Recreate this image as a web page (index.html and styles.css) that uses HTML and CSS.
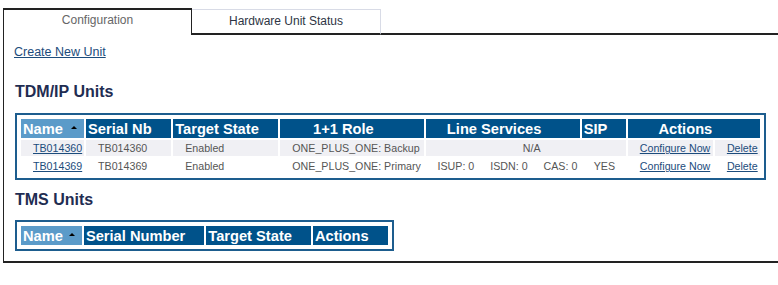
FILE: index.html
```html
<!DOCTYPE html>
<html lang="en">
<head>
    <meta charset="UTF-8">
    <title>Unit Configuration</title>
    <link rel="stylesheet" href="styles.css">
</head>
<body>

    <div class="tab-bar">
        <div class="tab tab-active">Configuration</div>
        <div class="tab">Hardware Unit Status</div>
        <div class="tab-fill"></div>
    </div>

    <div class="panel">
        <a href="#" class="create-link">Create New Unit</a>

        <h3 class="section-title">TDM/IP Units</h3>
        <table class="units units-tdm">
            <colgroup>
                <col style="width: 63px">
                <col style="width: 85px">
                <col style="width: 105px">
                <col style="width: 143px">
                <col style="width: 154px">
                <col style="width: 44px">
                <col style="width: 85px">
                <col style="width: 45px">
            </colgroup>
            <thead>
                <tr>
                    <th class="sorted">Name</th>
                    <th>Serial Nb</th>
                    <th>Target State</th>
                    <th class="center">1+1 Role</th>
                    <th class="center">Line Services</th>
                    <th>SIP</th>
                    <th class="center" colspan="2">Actions</th>
                </tr>
            </thead>
            <tbody>
                <tr class="odd">
                    <td><a href="#">TB014360</a></td>
                    <td>TB014360</td>
                    <td>Enabled</td>
                    <td>ONE_PLUS_ONE: Backup</td>
                    <td class="center" colspan="2">N/A</td>
                    <td><a href="#">Configure Now</a></td>
                    <td><a href="#">Delete</a></td>
                </tr>
                <tr>
                    <td><a href="#">TB014369</a></td>
                    <td>TB014369</td>
                    <td>Enabled</td>
                    <td>ONE_PLUS_ONE: Primary</td>
                    <td><span class="svc">ISUP: 0</span><span class="svc">ISDN: 0</span><span>CAS: 0</span></td>
                    <td>YES</td>
                    <td><a href="#">Configure Now</a></td>
                    <td><a href="#">Delete</a></td>
                </tr>
            </tbody>
        </table>

        <h3 class="section-title section-tms">TMS Units</h3>
        <table class="units">
            <thead>
                <tr>
                    <th class="sorted">Name</th>
                    <th>Serial Number</th>
                    <th>Target State</th>
                    <th>Actions</th>
                </tr>
            </thead>
        </table>
    </div>

</body>
</html>
```

FILE: styles.css
```css
body {
    font-family: "Liberation Sans", Arial, sans-serif;
    background-color: #fff;
    margin: 8px 0 0 3px;
    padding: 0;
}

a {
    color: #1c4c7c;
}

/* tabs */
.tab-bar {
    display: flex;
    align-items: flex-end;
}

.tab {
    box-sizing: border-box;
    width: 189px;
    height: 26px;
    line-height: 22px;
    text-align: center;
    font-size: 12px;
    color: #2e3544;
    border-top: 1px solid #d8dbe6;
    border-right: 1px solid #d8dbe6;
    border-bottom: 2px solid #222;
}

.tab-active {
    height: 27px;
    line-height: 20px;
    color: #666;
    border: 1px solid #222;
    border-top-width: 2px;
    border-bottom: none;
}

.tab-fill {
    flex: 1;
    border-bottom: 2px solid #222;
}

/* panel */
.panel {
    border-left: 1px solid #222;
    border-bottom: 2px solid #222;
    padding: 10px 0 10px 11px;
}

.create-link {
    display: block;
    font-size: 12.5px;
    line-height: 15px;
    margin-left: -1px;
}

.section-title {
    font-size: 16px;
    line-height: 19px;
    font-weight: bold;
    color: #1f2d52;
    margin: 22px 0 12px;
}

.section-tms {
    margin: 10px 0 11px;
}

/* unit tables */
.units {
    border: 2px solid #1d5d8e;
    padding: 2px;
    border-spacing: 2px;
}

.units-tdm {
    table-layout: fixed;
    width: 751px;
}

.units th {
    position: relative;
    height: 19px;
    padding: 0 19px 0 2px;
    background-color: #00528a;
    color: #fff;
    font-size: 14.67px;
    font-weight: bold;
    text-align: left;
    white-space: nowrap;
}

.units th.sorted {
    background-color: #5b9bc9;
}

.units th.sorted::after {
    content: "";
    position: absolute;
    right: 7px;
    top: 7px;
    border-left: 3px solid transparent;
    border-right: 3px solid transparent;
    border-bottom: 3px solid #000;
}

.units th.center,
.units td.center {
    text-align: center;
}

.units td {
    height: 16px;
    padding: 0 0 0 12px;
    font-size: 10.67px;
    color: #555;
    white-space: nowrap;
}

.units tr.odd td {
    background-color: #f0f0f4;
}

.svc {
    margin-right: 16px;
}
```
